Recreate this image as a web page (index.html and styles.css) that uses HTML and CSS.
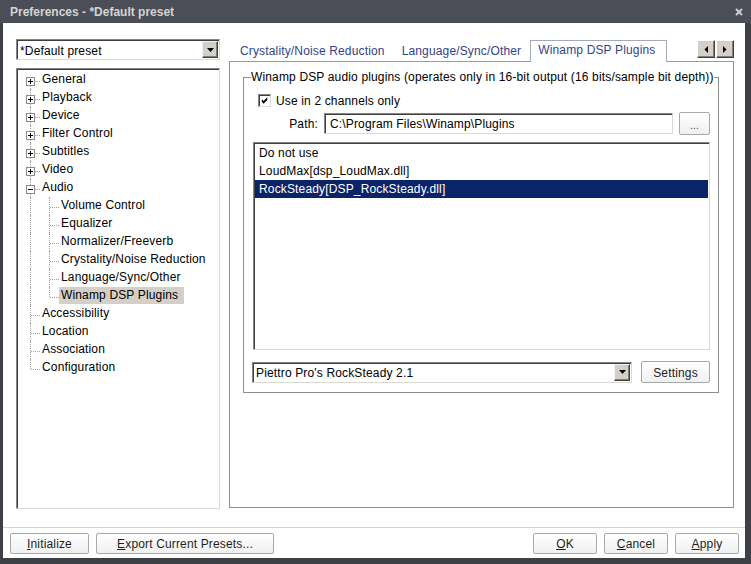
FILE: index.html
```html
<!DOCTYPE html>
<html>
<head>
<meta charset="utf-8">
<title>Preferences</title>
<link rel="stylesheet" href="styles.css">
</head>
<body>
<div class="window">
  <header class="titlebar">
    <span class="title">Preferences - *Default preset</span>
    <svg class="close" width="8" height="8" viewBox="0 0 8 8"><path d="M1 1L7 7M7 1L1 7" stroke="#cdcdcd" stroke-width="2"/></svg>
  </header>
  <div class="frame">
    <div class="main">
      <div class="sidebar">
        <div class="combo sunken preset">
          <span class="combo-text">*Default preset</span>
          <span class="drop"><svg width="7" height="4" viewBox="0 0 7 4"><path d="M0 0h7L3.5 4z" fill="#000"/></svg></span>
        </div>
        <div class="tree sunken">
          <div class="node"><span class="g first"><svg class="box" width="9" height="9" viewBox="0 0 9 9"><rect x=".5" y=".5" width="8" height="8" fill="#fff" stroke="#8a8a8a"/><path d="M2 4.5h5M4.5 2v5" stroke="#000"/></svg></span><span class="label">General</span></div>
          <div class="node"><span class="g"><svg class="box" width="9" height="9" viewBox="0 0 9 9"><rect x=".5" y=".5" width="8" height="8" fill="#fff" stroke="#8a8a8a"/><path d="M2 4.5h5M4.5 2v5" stroke="#000"/></svg></span><span class="label">Playback</span></div>
          <div class="node"><span class="g"><svg class="box" width="9" height="9" viewBox="0 0 9 9"><rect x=".5" y=".5" width="8" height="8" fill="#fff" stroke="#8a8a8a"/><path d="M2 4.5h5M4.5 2v5" stroke="#000"/></svg></span><span class="label">Device</span></div>
          <div class="node"><span class="g"><svg class="box" width="9" height="9" viewBox="0 0 9 9"><rect x=".5" y=".5" width="8" height="8" fill="#fff" stroke="#8a8a8a"/><path d="M2 4.5h5M4.5 2v5" stroke="#000"/></svg></span><span class="label">Filter Control</span></div>
          <div class="node"><span class="g"><svg class="box" width="9" height="9" viewBox="0 0 9 9"><rect x=".5" y=".5" width="8" height="8" fill="#fff" stroke="#8a8a8a"/><path d="M2 4.5h5M4.5 2v5" stroke="#000"/></svg></span><span class="label">Subtitles</span></div>
          <div class="node"><span class="g"><svg class="box" width="9" height="9" viewBox="0 0 9 9"><rect x=".5" y=".5" width="8" height="8" fill="#fff" stroke="#8a8a8a"/><path d="M2 4.5h5M4.5 2v5" stroke="#000"/></svg></span><span class="label">Video</span></div>
          <div class="node"><span class="g"><svg class="box" width="9" height="9" viewBox="0 0 9 9"><rect x=".5" y=".5" width="8" height="8" fill="#fff" stroke="#8a8a8a"/><path d="M2 4.5h5" stroke="#000"/></svg></span><span class="label">Audio</span></div>
          <div class="node"><span class="g pass"></span><span class="g"></span><span class="label">Volume Control</span></div>
          <div class="node"><span class="g pass"></span><span class="g"></span><span class="label">Equalizer</span></div>
          <div class="node"><span class="g pass"></span><span class="g"></span><span class="label">Normalizer/Freeverb</span></div>
          <div class="node"><span class="g pass"></span><span class="g"></span><span class="label">Crystality/Noise Reduction</span></div>
          <div class="node"><span class="g pass"></span><span class="g"></span><span class="label">Language/Sync/Other</span></div>
          <div class="node"><span class="g pass"></span><span class="g last"></span><span class="label sel">Winamp DSP Plugins</span></div>
          <div class="node"><span class="g"></span><span class="label">Accessibility</span></div>
          <div class="node"><span class="g"></span><span class="label">Location</span></div>
          <div class="node"><span class="g"></span><span class="label">Association</span></div>
          <div class="node"><span class="g last"></span><span class="label">Configuration</span></div>
        </div>
      </div>
      <div class="content">
        <div class="tabstrip">
          <span class="tab">Crystality/Noise Reduction</span>
          <span class="tab">Language/Sync/Other</span>
          <span class="tab active">Winamp DSP Plugins</span>
          <div class="scroller">
            <span class="sbtn"><svg width="4" height="7" viewBox="0 0 4 7"><path d="M4 0v7L0.5 3.5z" fill="#000"/></svg></span>
            <span class="sbtn"><svg width="4" height="7" viewBox="0 0 4 7"><path d="M0 0v7L3.5 3.5z" fill="#000"/></svg></span>
          </div>
        </div>
        <div class="panel">
          <fieldset class="group">
            <legend>Winamp DSP audio plugins (operates only in 16-bit output (16 bits/sample bit depth))</legend>
            <div class="check-row">
              <span class="checkbox sunken"><svg width="11" height="11" viewBox="0 0 11 11"><path d="M2 4l2 2 4-4v3l-4 4-2-2z" fill="#000"/></svg></span>
              <span class="check-text">Use in 2 channels only</span>
            </div>
            <div class="path-row">
              <span class="path-label">Path:</span>
              <div class="field sunken">C:\Program Files\Winamp\Plugins</div>
              <button class="btn dots">...</button>
            </div>
            <ul class="listbox sunken">
              <li>Do not use</li>
              <li>LoudMax[dsp_LoudMax.dll]</li>
              <li class="sel">RockSteady[DSP_RockSteady.dll]</li>
            </ul>
            <div class="combo-row">
              <div class="combo sunken plugin">
                <span class="combo-text">Piettro Pro's RockSteady 2.1</span>
                <span class="drop"><svg width="7" height="4" viewBox="0 0 7 4"><path d="M0 0h7L3.5 4z" fill="#000"/></svg></span>
              </div>
              <button class="btn settings">Settings</button>
            </div>
          </fieldset>
        </div>
      </div>
    </div>
    <footer class="footer">
      <button class="btn init"><u>I</u>nitialize</button>
      <button class="btn export"><u>E</u>xport Current Presets...</button>
      <button class="btn ok"><u>O</u>K</button>
      <button class="btn cancel"><u>C</u>ancel</button>
      <button class="btn apply"><u>A</u>pply</button>
    </footer>
  </div>
</div>
</body>
</html>
```
FILE: styles.css
```css
* { box-sizing: border-box; }

body {
  margin: 0;
  width: 751px;
  height: 564px;
  overflow: hidden;
  font-family: "Liberation Sans", Arial, sans-serif;
  font-size: 12px;
  letter-spacing: 0.15px;
  color: #000;
}

.window {
  display: flex;
  flex-direction: column;
  width: 751px;
  height: 564px;
  background: #3d4047;
}

.titlebar {
  height: 23px;
  flex: none;
  display: flex;
  align-items: center;
  padding: 0 8px 0 10px;
  background: #4b4e56;
  color: #d3d3d3;
}

.title {
  flex: 1;
  font-weight: bold;
  letter-spacing: 0;
}

.close { flex: none; }

.frame {
  flex: 1;
  display: flex;
  flex-direction: column;
  background: #fff;
  margin: 0 6px 6px 3px;
}

.main {
  flex: 1;
  display: flex;
  min-height: 0;
}

.sidebar {
  width: 204px;
  margin-left: 13px;
  padding: 16px 0 18px;
  display: flex;
  flex-direction: column;
  gap: 8px;
}

.content {
  width: 505px;
  margin-left: 9px;
  padding: 17px 0 19px;
  display: flex;
  flex-direction: column;
}

/* sunken 3D controls */
.sunken {
  border: 1px solid;
  border-color: #858585 #dcd9d2 #dcd9d2 #858585;
  box-shadow: inset 1px 1px 0 #3f3f3f;
  background: #fff;
}

/* combo boxes */
.combo {
  display: flex;
  align-items: stretch;
  height: 21px;
  padding: 1px 1px 1px 3px;
}

.combo-text {
  flex: 1;
  line-height: 17px;
  padding-top: 1px;
  white-space: nowrap;
}

.preset .combo-text { padding-top: 2px; }

.drop {
  flex: none;
  width: 16px;
  display: flex;
  align-items: center;
  justify-content: center;
  background: #d4d0c8;
  border: 1px solid;
  border-color: #f4f3ef #404040 #404040 #f4f3ef;
  box-shadow: inset -1px -1px 0 #808080;
}

/* tree */
.tree {
  flex: 1;
  padding: 2px 0 0 4px;
}

.node {
  display: flex;
  height: 18px;
}

.g {
  position: relative;
  flex: none;
  width: 19px;
  height: 18px;
}

.g::before {
  content: "";
  position: absolute;
  left: 9px;
  top: 0;
  height: 18px;
  border-left: 1px dotted #a0a0a0;
}

.g.first::before { top: 10px; height: 8px; }
.g.last::before { height: 10px; }

.g::after {
  content: "";
  position: absolute;
  left: 10px;
  width: 9px;
  top: 10px;
  border-top: 1px dotted #a0a0a0;
}

.g.pass::after { display: none; }

.box {
  position: absolute;
  left: 5px;
  top: 6px;
  z-index: 1;
}

.label {
  height: 17px;
  line-height: 17px;
  padding: 0 2px;
  white-space: nowrap;
}

.label.sel {
  background: #d4d0c8;
  padding-right: 6px;
}

/* tabs */
.tabstrip {
  display: flex;
  align-items: flex-end;
  height: 21px;
  flex: none;
  padding-left: 3px;
}

.tab {
  height: 20px;
  line-height: 18px;
  padding: 1px 8px 0;
  margin-right: 1px;
  color: #33438b;
  white-space: nowrap;
}

.tab.active {
  position: relative;
  z-index: 1;
  height: 22px;
  line-height: 17px;
  margin-bottom: -1px;
  padding: 1px 11px 0 7px;
  border: 1px solid #a3abbb;
  border-bottom: none;
  background: #fff;
}

.scroller {
  margin-left: auto;
  align-self: flex-start;
  display: flex;
  gap: 1px;
}

.sbtn {
  width: 18px;
  height: 18px;
  display: flex;
  align-items: center;
  justify-content: center;
  background: #d4d0c8;
  border: 1px solid;
  border-color: #ffffff #404040 #404040 #ffffff;
  box-shadow: inset -1px -1px 0 #808080;
}

.panel {
  flex: 1;
  border: 1px solid #8e8e8e;
  border-top-color: #9c9c9c;
  padding: 0 14px 0 13px;
}

/* group box */
.group {
  margin: 8px 0 0;
  padding: 0 8px 9px 9px;
  border: 1px solid #8d8d8d;
  min-width: 0;
}

.group legend {
  padding: 1px 0 0;
  margin-left: -2px;
  line-height: 13px;
  white-space: nowrap;
}

.check-row {
  display: flex;
  align-items: center;
  height: 18px;
  margin: 7px 0 0 5px;
  gap: 5px;
}

.check-text { padding-top: 1px; }

.checkbox {
  width: 13px;
  height: 13px;
  display: flex;
  align-items: center;
  justify-content: center;
  padding: 1px 0 0 1px;
}

.path-row {
  display: flex;
  align-items: center;
  height: 23px;
  margin-top: 3px;
}

.path-label {
  width: 65px;
  margin-right: 6px;
  padding-top: 1px;
  text-align: right;
}

.field {
  flex: 1;
  height: 21px;
  line-height: 19px;
  padding: 1px 0 0 5px;
  white-space: nowrap;
}

.listbox {
  list-style: none;
  margin: 7px 0 0;
  height: 208px;
  padding: 1px 1px 0 1px;
}

.listbox li {
  height: 18px;
  line-height: 18px;
  padding-left: 4px;
  white-space: nowrap;
}

.listbox li.sel {
  background: #0a246a;
  color: #fff;
}

.combo-row {
  display: flex;
  align-items: center;
  height: 22px;
  margin-top: 11px;
  gap: 9px;
}

.combo.plugin {
  flex: 1;
  margin-left: -1px;
}

/* push buttons */
.btn {
  border: 1px solid #a9a9a9;
  border-radius: 2px;
  background: linear-gradient(#ffffff, #f0f0f0);
  font: inherit;
  letter-spacing: inherit;
  color: #1e1e1e;
  padding: 1px 0 0;
  height: 21px;
  text-align: center;
}

.btn.dots {
  width: 31px;
  height: 23px;
  margin-left: 6px;
  font-size: 10px;
  color: #444;
  padding-top: 3px;
}

.btn.settings {
  width: 69px;
  height: 22px;
}

.footer {
  height: 31px;
  flex: none;
  display: flex;
  align-items: flex-start;
  gap: 7px;
  padding: 5px 6px 0 7px;
  border-top: 1px solid #d6d3cc;
}

.btn.init { width: 79px; }
.btn.export { width: 178px; }
.btn.ok { width: 64px; margin-left: auto; }
.btn.cancel { width: 64px; }
.btn.apply { width: 64px; }
```
